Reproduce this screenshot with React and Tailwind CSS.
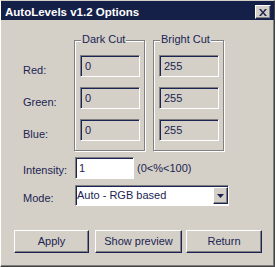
import React from 'react';

const navy = 'text-[#1b2452]';

function Sunken({ className = '', children }) {
  return (
    <div
      className={`border border-t-[#808080] border-l-[#808080] border-r-white border-b-white shadow-[inset_1px_1px_0_#1b2452] ${className}`}
    >
      {children}
    </div>
  );
}

function GroupBox({ label, values }) {
  return (
    <div className="relative w-[71px] h-[111px] border border-[#808080] shadow-[inset_1px_1px_0_#fff,1px_1px_0_#fff] pl-[5px] pt-[14px] flex flex-col gap-[10px]">
      <span className="absolute -top-[8px] left-[6px] px-[1px] bg-[#d4d0c8] leading-[13px]">{label}</span>
      {values.map((v, i) => (
        <Sunken key={i} className="w-[60px] h-[22px] flex items-center pl-[4px] leading-[13px]">
          {v}
        </Sunken>
      ))}
    </div>
  );
}

function Button({ w, className = '', children }) {
  return (
    <button
      className={`${w} h-[23px] bg-[#d4d0c8] border border-t-white border-l-white border-r-[#1b2452] border-b-[#1b2452] shadow-[inset_-1px_-1px_0_#808080] flex items-center justify-center leading-[13px] ${className}`}
    >
      {children}
    </button>
  );
}

export default function App() {
  return (
    <div
      className={`w-[275px] h-[267px] bg-[#d4d0c8] flex flex-col border border-t-[#d4d0c8] border-l-white border-r-[#404040] border-b-[#404040] shadow-[inset_-1px_-1px_0_#808080] font-['Liberation_Sans',Arial,sans-serif] text-[11px] ${navy}`}
    >
      {/* title bar */}
      <div className="h-[19px] bg-[#152049] flex items-start justify-between pl-[4px] pr-[3px]">
        <span className="mt-[5px] text-white font-bold text-[11.5px] leading-[13px]">AutoLevels v1.2 Options</span>
        <div className="mt-[4px] w-[16px] h-[14px] bg-[#d4d0c8] border border-t-white border-l-white border-r-[#1b2452] border-b-[#1b2452] shadow-[inset_-1px_-1px_0_#808080] flex items-center justify-center">
          <svg width="8" height="7" viewBox="0 0 8 7">
            <path d="M0 0h2l2 2.5L6 0h2L5 3.5 8 7H6L4 4.5 2 7H0l3-3.5z" fill="#1b2452" />
          </svg>
        </div>
      </div>

      {/* body */}
      <div className="flex-1 flex flex-col pl-[22px] pt-[20px]">
        <div className="flex">
          <div className="w-[51px] pt-[24px] flex flex-col gap-[19px] leading-[13px]">
            <span>Red:</span>
            <span>Green:</span>
            <span>Blue:</span>
          </div>
          <div className="flex gap-[8px]">
            <GroupBox label="Dark Cut" values={['0', '0', '0']} />
            <GroupBox label="Bright Cut" values={['255', '255', '255']} />
          </div>
        </div>

        <div className="mt-[6px] flex items-start leading-[13px]">
          <span className="w-[52px] pt-[7px]">Intensity:</span>
          <Sunken className="w-[59px] h-[22px] bg-white flex items-center pl-[3px]">1</Sunken>
          <span className="ml-[3px] pt-[5px]">(0&lt;%&lt;100)</span>
        </div>

        <div className="mt-[6px] flex items-start leading-[13px]">
          <span className="w-[52px] pt-[7px]">Mode:</span>
          <Sunken className="w-[154px] h-[21px] bg-white flex items-center">
            <span className="flex-1 pl-[1px]">Auto - RGB based</span>
            <div className="w-[15px] h-[17px] bg-[#d4d0c8] border border-t-white border-l-white border-r-[#1b2452] border-b-[#1b2452] shadow-[inset_-1px_-1px_0_#808080] flex items-center justify-center">
              <svg width="7" height="4" viewBox="0 0 7 4">
                <path d="M0 0h7L3.5 4z" fill="#1b2452" />
              </svg>
            </div>
          </Sunken>
        </div>

        <div className="mt-[24px] -ml-[9px] flex">
          <Button w="w-[75px]">Apply</Button>
          <Button w="w-[87px]" className="ml-[6px]">Show preview</Button>
          <Button w="w-[76px]" className="ml-[4px]">Return</Button>
        </div>
      </div>
    </div>
  );
}
